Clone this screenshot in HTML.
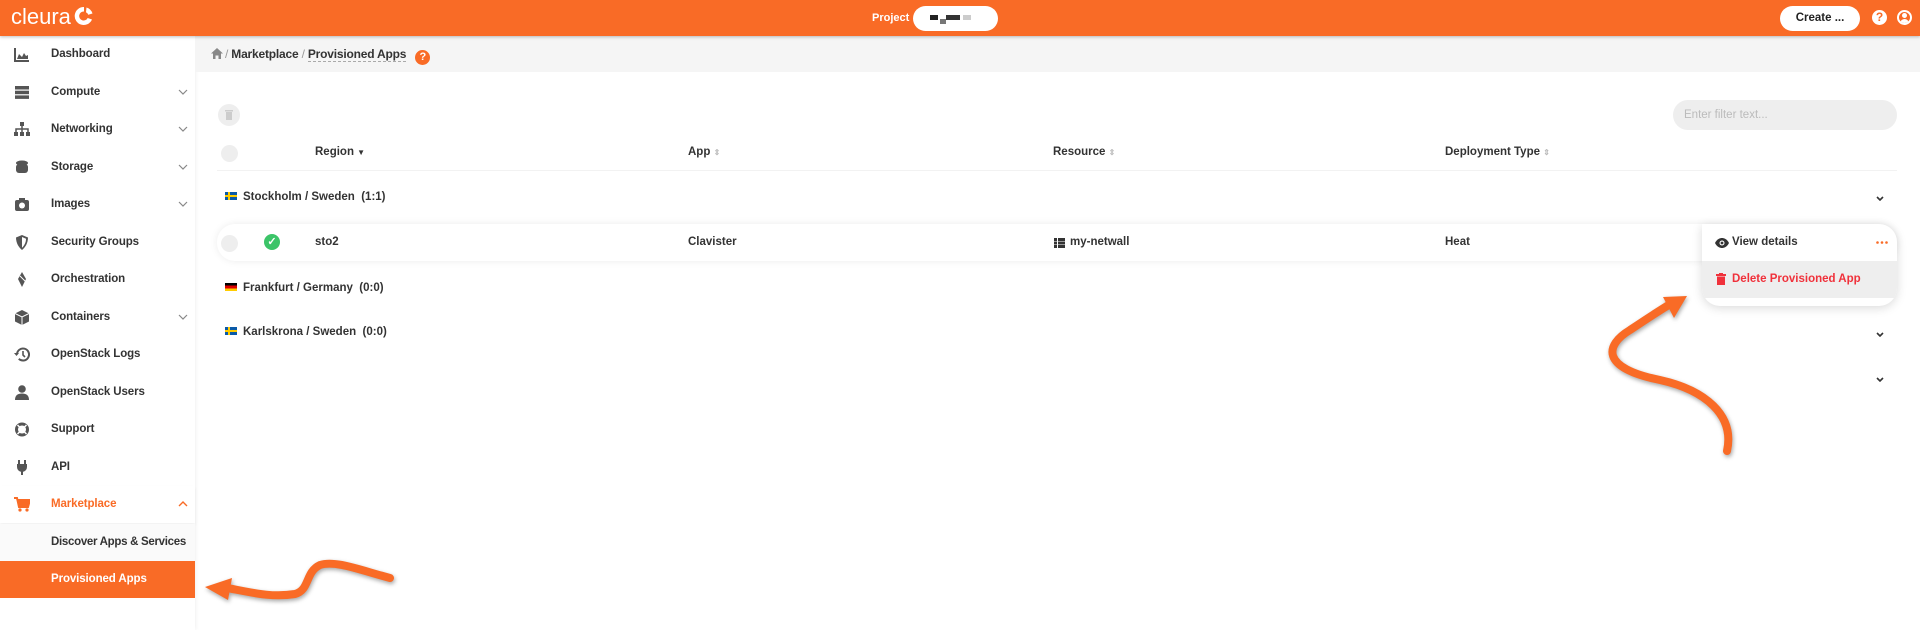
<!DOCTYPE html>
<html><head><meta charset="utf-8"><style>
*{box-sizing:border-box;margin:0;padding:0}
body{width:1920px;height:630px;overflow:hidden;font-family:"Liberation Sans",sans-serif;background:#fff;position:relative;color:#333}
.hdr{position:absolute;left:0;top:0;width:1920px;height:36px;background:#f96b26;box-shadow:0 1px 3px rgba(0,0,0,.25);z-index:5}
.abs{position:absolute}
.side{position:absolute;left:0;top:36px;width:195px;height:594px;background:#fff;box-shadow:1px 0 4px rgba(0,0,0,.06)}
.it{position:absolute;left:0;width:195px;height:37px;font-size:11.5px;font-weight:bold;color:#333;line-height:37px;white-space:nowrap}
.it .t{position:absolute;left:51px;letter-spacing:-0.1px}
.it .ic{position:absolute;left:14px;top:11px;width:16px;height:15px}
.it .ch{position:absolute;left:178px;top:15px;width:10px;height:6px}
.th{position:absolute;top:146px;font-size:11.5px;font-weight:bold;color:#333}
.cell{position:absolute;font-size:11.5px;font-weight:bold;color:#333}
.chk{position:absolute;width:18px;height:18px;border-radius:50%;background:#eee}
.flag{display:inline-block;width:12px;height:8px;margin-right:6px;vertical-align:0}
</style></head><body>
<div class="hdr">
 <div class="abs" style="left:11px;top:4px;color:#fff;font-size:22px;letter-spacing:0">cleura</div>
 <svg class="abs" style="left:74px;top:6px" width="20" height="20" viewBox="0 0 20 20"><path d="M10 1a9 9 0 1 0 8 12.5l-4.3-1.5a4.5 4.5 0 1 1-3.7-6.5z" fill="#fff"/><path d="M12.5 1.5a9 9 0 0 1 6 6l-4.3 1.3a4.5 4.5 0 0 0-2.2-2.5z" fill="#fff"/></svg>
 <div class="abs" style="left:872px;top:12px;color:#fff;font-size:11px;font-weight:bold">Project</div>
 <div class="abs" style="left:913px;top:6px;width:85px;height:25px;border-radius:13px;background:#fff"></div>
 <div class="abs" style="left:930px;top:15px;width:8px;height:5px;background:#222"></div><div class="abs" style="left:940px;top:19px;width:6px;height:5px;background:#777"></div><div class="abs" style="left:946px;top:15px;width:14px;height:5px;background:#333"></div><div class="abs" style="left:963px;top:15px;width:8px;height:5px;background:#ccc"></div>
 <div class="abs" style="left:1780px;top:6px;width:80px;height:25px;border-radius:13px;background:#fff;font-size:11.5px;font-weight:bold;color:#222;text-align:center;line-height:25px">Create ...</div>
 <div class="abs" style="left:1872px;top:10px;width:15px;height:15px;border-radius:50%;background:#fff;color:#f96b26;font-size:12px;font-weight:bold;text-align:center;line-height:15px">?</div>
 <div class="abs" style="left:1897px;top:10px;width:15px;height:15px;border-radius:50%;border:2px solid #fff;overflow:hidden"><div class="abs" style="left:3px;top:1px;width:5px;height:5px;border-radius:50%;background:#fff"></div><div class="abs" style="left:1px;top:7px;width:9px;height:6px;border-radius:5px 5px 0 0;background:#fff"></div></div>
</div>

<div class="side">
 <div class="it" style="top:0"><svg class="ic" viewBox="0 0 16 15"><path d="M1 1v13h14" stroke="#555" stroke-width="2" fill="none"/><path d="M3 12l2-5 3 3 2-4 2 3 2-1v4z" fill="#555"/></svg><span class="t">Dashboard</span></div>
 <div class="it" style="top:37.5px"><svg class="ic" viewBox="0 0 16 15"><rect x="1" y="1" width="14" height="3.5" fill="#555"/><rect x="1" y="5.7" width="14" height="3.5" fill="#555"/><rect x="1" y="10.4" width="14" height="3.5" fill="#555"/></svg><span class="t">Compute</span><svg class="ch" viewBox="0 0 10 6"><path d="M1 1l4 4 4-4" stroke="#888" stroke-width="1.2" fill="none"/></svg></div>
 <div class="it" style="top:75px"><svg class="ic" viewBox="0 0 16 15"><rect x="6" y="0" width="4" height="4" fill="#555"/><rect x="0" y="10" width="4" height="4" fill="#555"/><rect x="6" y="10" width="4" height="4" fill="#555"/><rect x="12" y="10" width="4" height="4" fill="#555"/><path d="M8 4v6M2 10V7h12v3" stroke="#555" stroke-width="1.5" fill="none"/></svg><span class="t">Networking</span><svg class="ch" viewBox="0 0 10 6"><path d="M1 1l4 4 4-4" stroke="#888" stroke-width="1.2" fill="none"/></svg></div>
 <div class="it" style="top:112.5px"><svg class="ic" viewBox="0 0 16 15"><ellipse cx="8" cy="3" rx="6" ry="2.5" fill="#555"/><rect x="2" y="4" width="12" height="9" rx="3" fill="#555"/></svg><span class="t">Storage</span><svg class="ch" viewBox="0 0 10 6"><path d="M1 1l4 4 4-4" stroke="#888" stroke-width="1.2" fill="none"/></svg></div>
 <div class="it" style="top:150px"><svg class="ic" viewBox="0 0 16 15"><rect x="1" y="3" width="14" height="11" rx="2" fill="#555"/><rect x="5" y="1" width="6" height="3" fill="#555"/><circle cx="8" cy="8.5" r="3" fill="#fff"/></svg><span class="t">Images</span><svg class="ch" viewBox="0 0 10 6"><path d="M1 1l4 4 4-4" stroke="#888" stroke-width="1.2" fill="none"/></svg></div>
 <div class="it" style="top:187.5px"><svg class="ic" viewBox="0 0 16 15"><path d="M8 0l6 2.5c0 6-3 10-6 12.5C5 12.5 2 8.5 2 2.5z" fill="#555"/><path d="M8 2l4 1.8c0 4-2 7-4 9z" fill="#fff"/></svg><span class="t">Security Groups</span></div>
 <div class="it" style="top:225px"><svg class="ic" viewBox="0 0 16 15"><path d="M8 0l4 7-4 8-4-8z" fill="#555"/><path d="M6 4l6 6" stroke="#fff" stroke-width="1"/></svg><span class="t">Orchestration</span></div>
 <div class="it" style="top:262.5px"><svg class="ic" viewBox="0 0 16 15"><path d="M8 0l7 3.5v8L8 15 1 11.5v-8z" fill="#555"/><path d="M1 3.5l7 3.5 7-3.5M8 7v8" stroke="#fff" stroke-width="1" fill="none"/></svg><span class="t">Containers</span><svg class="ch" viewBox="0 0 10 6"><path d="M1 1l4 4 4-4" stroke="#888" stroke-width="1.2" fill="none"/></svg></div>
 <div class="it" style="top:300px"><svg class="ic" viewBox="0 0 16 15"><path d="M3 7.5a6 6 0 1 1 1.8 4.3" stroke="#555" stroke-width="2" fill="none"/><path d="M0 6h5l-2.5 3z" fill="#555"/><path d="M9 4v4l2 2" stroke="#555" stroke-width="1.6" fill="none"/></svg><span class="t">OpenStack Logs</span></div>
 <div class="it" style="top:337.5px"><svg class="ic" viewBox="0 0 16 15"><circle cx="8" cy="4" r="3.8" fill="#555"/><path d="M1 15c0-5 3-6.5 7-6.5s7 1.5 7 6.5z" fill="#555"/></svg><span class="t">OpenStack Users</span></div>
 <div class="it" style="top:375px"><svg class="ic" viewBox="0 0 16 15"><circle cx="8" cy="7.5" r="5.5" stroke="#555" stroke-width="3" fill="none"/><path d="M3.5 3l3 3M12.5 3l-3 3M3.5 12l3-3M12.5 12l-3-3" stroke="#fff" stroke-width="1.5"/></svg><span class="t">Support</span></div>
 <div class="it" style="top:412.5px"><svg class="ic" viewBox="0 0 16 15"><path d="M5 0v4M11 0v4" stroke="#555" stroke-width="2"/><path d="M3 4h10v3a5 5 0 0 1-10 0z" fill="#555"/><rect x="7" y="10" width="2" height="5" fill="#555"/></svg><span class="t">API</span></div>
 <div class="it" style="top:450px;box-shadow:0 2px 3px rgba(0,0,0,.06);color:#f96b26"><svg class="ic" viewBox="0 0 16 15"><path d="M0 1h3l2 9h9l2-7H4" stroke="#f96b26" stroke-width="2" fill="#f96b26"/><circle cx="6" cy="13" r="1.6" fill="#f96b26"/><circle cx="13" cy="13" r="1.6" fill="#f96b26"/></svg><span class="t">Marketplace</span><svg class="ch" viewBox="0 0 10 6"><path d="M1 5l4-4 4 4" stroke="#f96b26" stroke-width="1.4" fill="none"/></svg></div>
 <div class="it" style="top:487.5px;background:#fafafa"><span class="t" style="letter-spacing:-0.3px">Discover Apps &amp; Services</span></div>
 <div class="it" style="top:525px;background:#f96b26;color:#fff"><span class="t">Provisioned Apps</span></div>
</div>

<div class="abs" style="left:195px;top:36px;width:1725px;height:36px;background:#f5f5f5"></div>
<svg class="abs" style="left:211px;top:48px" width="12" height="11" viewBox="0 0 12 11"><path d="M6 0l6 5.5h-2V11H7.5V7.5h-3V11H2V5.5H0z" fill="#888"/></svg>
<div class="abs" style="left:225px;top:47px;font-size:12px;color:#333;white-space:nowrap;letter-spacing:-0.2px"><span style="color:#999">/</span> <b>Marketplace</b> <span style="color:#999">/</span> <b style="border-bottom:1px dashed #aaa">Provisioned Apps</b><span style="display:inline-block;margin-left:9px;width:15px;height:15px;border-radius:50%;background:#f96b26;color:#fff;font-size:11px;font-weight:bold;text-align:center;line-height:15px;vertical-align:-2px">?</span></div>

<div class="chk" style="left:218px;top:104px;width:22px;height:22px"></div>
<svg class="abs" style="left:225px;top:109px" width="8" height="11" viewBox="0 0 8 11"><rect x="0" y="1" width="8" height="1.5" fill="#ccc"/><rect x="1" y="3" width="6" height="8" fill="#ccc"/></svg>
<div class="abs" style="left:1673px;top:100px;width:224px;height:30px;border-radius:15px;background:#eee;font-size:11.5px;color:#bbb;line-height:30px;padding-left:11px">Enter filter text...</div>

<div class="chk" style="left:221px;top:145px;width:17px;height:17px"></div>
<div class="th" style="left:315px">Region <span style="font-size:8px">&#9660;</span></div>
<div class="th" style="left:688px">App <span style="color:#bbb;font-size:8px">&#8661;</span></div>
<div class="th" style="left:1053px">Resource <span style="color:#bbb;font-size:8px">&#8661;</span></div>
<div class="th" style="left:1445px">Deployment Type <span style="color:#bbb;font-size:8px">&#8661;</span></div>
<div class="abs" style="left:217px;top:170px;width:1680px;height:1px;background:#f2f2f2"></div>

<div class="cell" style="left:225px;top:191px"><span class="flag" style="background:#0a5aa8;position:relative"><span style="position:absolute;left:3px;top:0;width:2px;height:8px;background:#fc0"></span><span style="position:absolute;left:0;top:3px;width:12px;height:2px;background:#fc0"></span></span>Stockholm / Sweden&nbsp; (1:1)</div>
<svg class="abs" style="left:1876px;top:196px" width="8" height="5" viewBox="0 0 8 5"><path d="M1 1l3 3 3-3" stroke="#333" stroke-width="1.6" fill="none"/></svg>

<div class="abs" style="left:217px;top:224px;width:1680px;height:37px;border-radius:18px;background:#fff;box-shadow:0 0 8px rgba(0,0,0,.08)"></div>
<div class="chk" style="left:221px;top:235px;width:17px;height:17px"></div>
<div class="abs" style="left:264px;top:234px;width:16px;height:16px;border-radius:50%;background:#3cc468;color:#fff;font-size:11px;font-weight:bold;text-align:center;line-height:16px">&#10003;</div>
<div class="cell" style="left:315px;top:236px">sto2</div>
<div class="cell" style="left:688px;top:236px">Clavister</div>
<svg class="abs" style="left:1054px;top:238px" width="11" height="10" viewBox="0 0 11 10"><path d="M0 0h3v3H0zM4 0h7v3H4zM0 3.5h3v3H0zM4 3.5h7v3H4zM0 7h3v3H0zM4 7h7v3H4z" fill="#333"/></svg>
<div class="cell" style="left:1070px;top:236px">my-netwall</div>
<div class="cell" style="left:1445px;top:236px">Heat</div>

<div class="cell" style="left:225px;top:282px"><span class="flag" style="background:linear-gradient(#000 33%,#d00 33% 66%,#fc0 66%)"></span>Frankfurt / Germany&nbsp; (0:0)</div>
<div class="cell" style="left:225px;top:326px"><span class="flag" style="background:#0a5aa8;position:relative"><span style="position:absolute;left:3px;top:0;width:2px;height:8px;background:#fc0"></span><span style="position:absolute;left:0;top:3px;width:12px;height:2px;background:#fc0"></span></span>Karlskrona / Sweden&nbsp; (0:0)</div>
<svg class="abs" style="left:1876px;top:332px" width="8" height="5" viewBox="0 0 8 5"><path d="M1 1l3 3 3-3" stroke="#333" stroke-width="1.6" fill="none"/></svg>
<svg class="abs" style="left:1876px;top:377px" width="8" height="5" viewBox="0 0 8 5"><path d="M1 1l3 3 3-3" stroke="#333" stroke-width="1.6" fill="none"/></svg>

<div class="abs" style="left:1702px;top:224px;width:195px;height:82px;border-radius:0 18px 18px 18px;background:#fff;box-shadow:0 2px 10px rgba(0,0,0,.15);overflow:hidden">
 <svg class="abs" style="left:13px;top:14px" width="14" height="10" viewBox="0 0 14 10"><path d="M0 5C2 1 5 0 7 0s5 1 7 5c-2 4-5 5-7 5S2 9 0 5z" fill="#333"/><circle cx="7" cy="5" r="2.5" fill="#fff"/><circle cx="7" cy="5" r="1.4" fill="#333"/></svg>
 <div class="abs" style="left:30px;top:12px;font-size:11.5px;font-weight:bold;color:#333">View details</div>
 <svg class="abs" style="left:174px;top:17px" width="12" height="3" viewBox="0 0 12 3"><circle cx="1.5" cy="1.5" r="1.3" fill="#f96b26"/><circle cx="6" cy="1.5" r="1.3" fill="#f96b26"/><circle cx="10.5" cy="1.5" r="1.3" fill="#f96b26"/></svg>
 <div class="abs" style="left:0;top:37px;width:195px;height:37px;background:#eee"></div>
 <svg class="abs" style="left:14px;top:49px" width="10" height="12" viewBox="0 0 10 12"><rect x="0" y="1" width="10" height="2" fill="#f0313b"/><rect x="3" y="0" width="4" height="2" fill="#f0313b"/><rect x="1" y="3.5" width="8" height="8.5" fill="#f0313b"/></svg>
 <div class="abs" style="left:30px;top:49px;font-size:11.5px;font-weight:bold;color:#f0313b">Delete Provisioned App</div>
</div>

<svg class="abs" style="left:0;top:0" width="1920" height="630" viewBox="0 0 1920 630">
 <g filter="drop-shadow(1px 2px 2px rgba(0,0,0,.35))">
 <path d="M390 578C360 570 335 560 320 565C305 572 310 590 295 594C270 598 250 592 222 587" stroke="#f96b26" stroke-width="8" fill="none" stroke-linecap="round"/>
 <path d="M205 587L232 578L228 600z" fill="#f96b26"/>
 <path d="M1727 451C1735 415 1705 390 1660 380C1600 368 1605 345 1630 330C1645 320 1660 310 1672 303" stroke="#f96b26" stroke-width="8" fill="none" stroke-linecap="round"/>
 <path d="M1687 296L1663 297L1674 318z" fill="#f96b26"/>
 </g>
</svg>
</body></html>
